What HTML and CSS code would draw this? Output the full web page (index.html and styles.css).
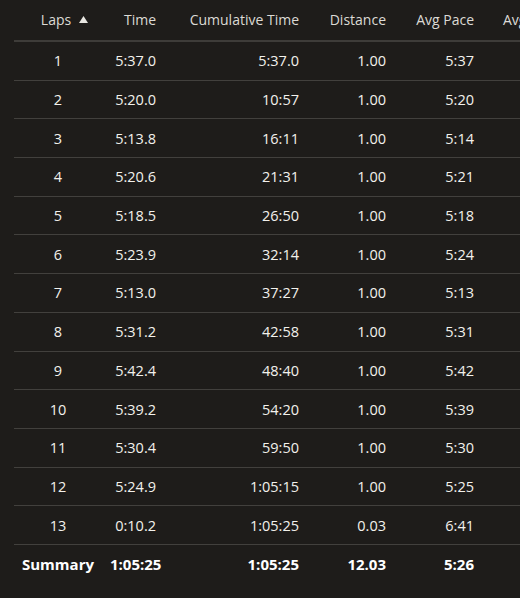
FILE: index.html
```html
<!DOCTYPE html>
<html lang="en">
<head>
<meta charset="utf-8">
<title>Laps</title>
<link rel="stylesheet" href="styles.css">
</head>
<body>
<div class="laps-table">
  <div class="row head">
    <div class="cell c-lap"><span class="lap-head">Laps <svg class="sort" width="9" height="7" viewBox="0 0 9 7"><path d="M4.5 0 L9 7 L0 7 Z" fill="#e8e6e1"/></svg></span></div>
    <div class="cell">Time</div>
    <div class="cell">Cumulative Time</div>
    <div class="cell">Distance</div>
    <div class="cell">Avg Pace</div>
    <div class="cell c-more">Avg HR</div>
  </div>
  <div class="row"><div class="cell c-lap">1</div><div class="cell">5:37.0</div><div class="cell">5:37.0</div><div class="cell">1.00</div><div class="cell">5:37</div><div class="cell c-more"></div></div>
  <div class="row"><div class="cell c-lap">2</div><div class="cell">5:20.0</div><div class="cell">10:57</div><div class="cell">1.00</div><div class="cell">5:20</div><div class="cell c-more"></div></div>
  <div class="row"><div class="cell c-lap">3</div><div class="cell">5:13.8</div><div class="cell">16:11</div><div class="cell">1.00</div><div class="cell">5:14</div><div class="cell c-more"></div></div>
  <div class="row"><div class="cell c-lap">4</div><div class="cell">5:20.6</div><div class="cell">21:31</div><div class="cell">1.00</div><div class="cell">5:21</div><div class="cell c-more"></div></div>
  <div class="row"><div class="cell c-lap">5</div><div class="cell">5:18.5</div><div class="cell">26:50</div><div class="cell">1.00</div><div class="cell">5:18</div><div class="cell c-more"></div></div>
  <div class="row"><div class="cell c-lap">6</div><div class="cell">5:23.9</div><div class="cell">32:14</div><div class="cell">1.00</div><div class="cell">5:24</div><div class="cell c-more"></div></div>
  <div class="row"><div class="cell c-lap">7</div><div class="cell">5:13.0</div><div class="cell">37:27</div><div class="cell">1.00</div><div class="cell">5:13</div><div class="cell c-more"></div></div>
  <div class="row"><div class="cell c-lap">8</div><div class="cell">5:31.2</div><div class="cell">42:58</div><div class="cell">1.00</div><div class="cell">5:31</div><div class="cell c-more"></div></div>
  <div class="row"><div class="cell c-lap">9</div><div class="cell">5:42.4</div><div class="cell">48:40</div><div class="cell">1.00</div><div class="cell">5:42</div><div class="cell c-more"></div></div>
  <div class="row"><div class="cell c-lap">10</div><div class="cell">5:39.2</div><div class="cell">54:20</div><div class="cell">1.00</div><div class="cell">5:39</div><div class="cell c-more"></div></div>
  <div class="row"><div class="cell c-lap">11</div><div class="cell">5:30.4</div><div class="cell">59:50</div><div class="cell">1.00</div><div class="cell">5:30</div><div class="cell c-more"></div></div>
  <div class="row"><div class="cell c-lap">12</div><div class="cell">5:24.9</div><div class="cell">1:05:15</div><div class="cell">1.00</div><div class="cell">5:25</div><div class="cell c-more"></div></div>
  <div class="row"><div class="cell c-lap">13</div><div class="cell">0:10.2</div><div class="cell">1:05:25</div><div class="cell">0.03</div><div class="cell">6:41</div><div class="cell c-more"></div></div>
  <div class="row summary"><div class="cell c-lap">Summary</div><div class="cell">1:05:25</div><div class="cell">1:05:25</div><div class="cell">12.03</div><div class="cell">5:26</div><div class="cell c-more"></div></div>
</div>
</body>
</html>
```
FILE: styles.css
```css
html, body {
  margin: 0;
  padding: 0;
  background: #1e1c1a;
  overflow: hidden;
}
body {
  width: 520px;
  height: 598px;
  font-family: "Open Sans", "Noto Sans", sans-serif;
  font-size: 14.5px;
  color: #f3f1ec;
}
.laps-table {
  margin-left: 14px;
  width: 506px;
  overflow: hidden;
}
.row {
  display: grid;
  grid-template-columns: 88px 62px 143px 87px 88px 132px;
  height: 38.7px;
  box-sizing: border-box;
  border-bottom: 1px solid #42403d;
  align-items: center;
}
.row.head {
  height: 42px;
  font-size: 14px;
  color: #dcdad5;
  border-bottom: 2px solid #3e3c39;
  padding-bottom: 1px;
}
.row.summary {
  border-bottom: none;
  font-weight: 700;
  font-size: 15px;
  color: #ffffff;
  height: 39px;
}
.cell {
  padding: 0 8px;
  text-align: right;
  white-space: nowrap;
  overflow: hidden;
}
.cell.c-lap {
  text-align: center;
}
.row.summary .cell.c-lap {
  padding: 0;
}
.head .cell.c-lap {
  padding-left: 21px;
}
.head .cell.c-more {
  text-align: left;
  padding-left: 21px;
  padding-right: 0;
  overflow: visible;
}
.lap-head {
  display: inline-flex;
  align-items: center;
  gap: 8px;
}
.sort {
  display: block;
  margin-top: -1px;
}
```
